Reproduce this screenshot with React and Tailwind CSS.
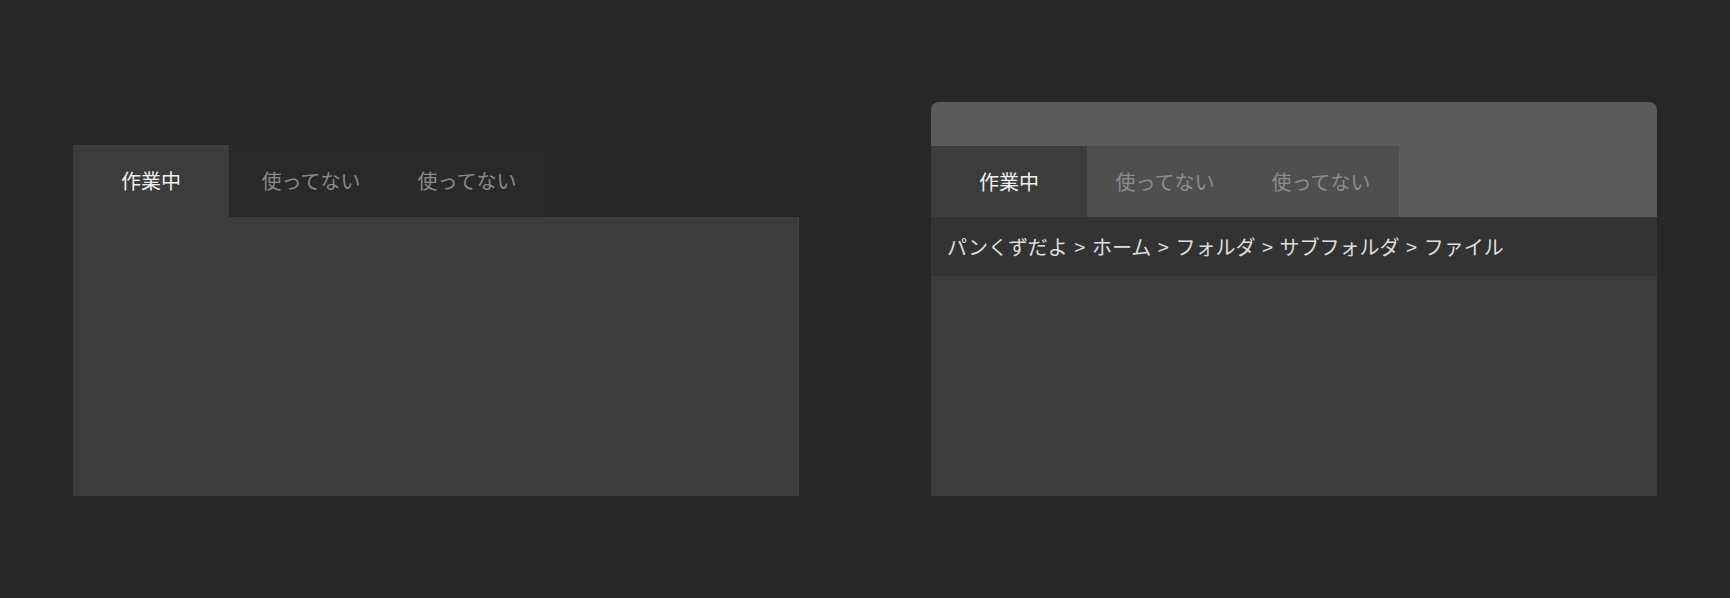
import React from 'react';

const tabs = ['作業中', '使ってない', '使ってない'];

const crumbs = ['パンくずだよ', 'ホーム', 'フォルダ', 'サブフォルダ', 'ファイル'];

const font = { fontFamily: '"Noto Sans CJK JP", "Noto Sans", sans-serif' };

// plain tab panel
const SimpleTabs = () => (
  <div className="w-[726px] flex flex-col">
    <div className="flex h-[72px]">
      <div className="w-[156px] flex items-center justify-center text-[20px] bg-[#3c3c3c] text-[#f0f0f0]">
        {tabs[0]}
      </div>
      <div className="flex pl-[4px] bg-[#292929]">
        {tabs.slice(1).map((t, i) => (
          <div key={i} className="w-[156px] flex items-center justify-center text-[20px] text-[#8a8a8a]">
            {t}
          </div>
        ))}
      </div>
    </div>
    <div className="h-[279px] bg-[#3c3c3c] border-r border-[#414141]"></div>
  </div>
);

// tab panel with header + breadcrumb
const WindowTabs = () => (
  <div className="w-[726px] flex flex-col rounded-t-lg overflow-hidden bg-[#5b5b5b]">
    <div className="h-[44px]"></div>
    <div className="flex h-[71px]">
      {tabs.map((t, i) => (
        <div
          key={i}
          className={`w-[156px] flex items-center justify-center text-[20px] ${
            i === 0 ? 'bg-[#3c3c3c] text-[#f0f0f0]' : 'bg-[#4f4f4f] text-[#8c8c8c]'
          }`}
        >
          {t}
        </div>
      ))}
    </div>
    <div className="h-[59px] bg-[#333333] flex items-center px-4 text-[20px] text-[#dedede] whitespace-nowrap">
      {crumbs.map((c, i) => (
        <React.Fragment key={i}>
          {i > 0 && <span className="mx-[6.5px]">&gt;</span>}
          {c}
        </React.Fragment>
      ))}
    </div>
    <div className="h-[220px] bg-[#3c3c3c]"></div>
  </div>
);

export default function App() {
  return (
    <div className="w-full h-[598px] bg-[#272727] flex items-end justify-center gap-[132px] pb-[102px]" style={font}>
      <SimpleTabs />
      <WindowTabs />
    </div>
  );
}
